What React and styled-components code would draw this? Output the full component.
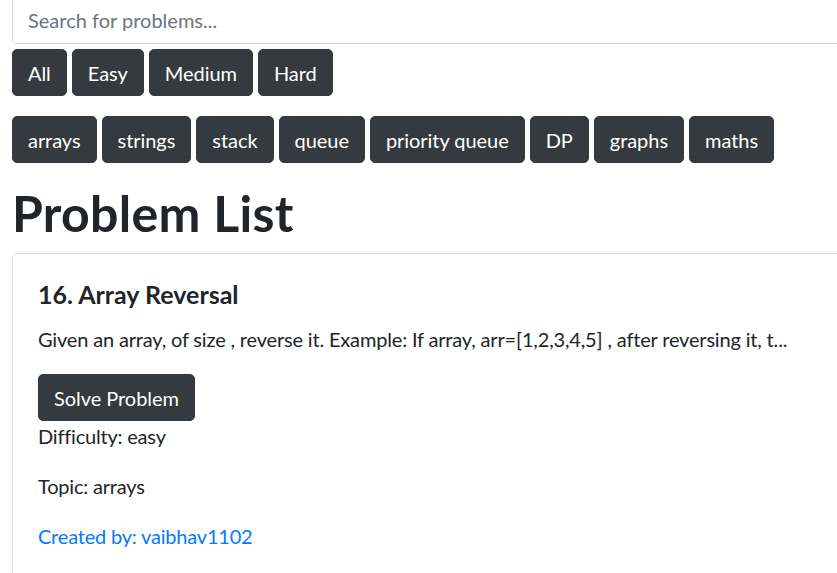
import React from 'react'
import styled, { createGlobalStyle } from 'styled-components'

const GlobalStyle = createGlobalStyle`
  html, body {
    margin: 0;
    padding: 0;
    overflow: hidden;
    background: #fff;
  }
  body {
    font-family: Lato, "Noto Sans", sans-serif;
    font-size: 20px;
    line-height: 1.5;
    color: #212529;
  }
`

const Page = styled.div`
  width: 1000px;
  padding-left: 12px;
  margin-top: -4px;
  box-sizing: border-box;
`

const SearchInput = styled.input`
  display: block;
  width: 100%;
  height: 48px;
  box-sizing: border-box;
  padding: 7px 15px;
  font-family: inherit;
  font-size: 20px;
  line-height: 1.5;
  color: #495057;
  background: #fff;
  border: 1px solid #ced4da;
  border-radius: 5px;
  outline: none;

  &::placeholder {
    color: #6c757d;
  }
`

const BtnRow = styled.div`
  display: flex;
  flex-wrap: wrap;
  gap: 5px;
  margin-top: ${props => props.top || 0}px;
`

const DarkBtn = styled.button`
  height: 47px;
  padding: 0 15px;
  font-family: inherit;
  font-size: 20px;
  line-height: 1.5;
  letter-spacing: -0.05px;
  color: #fff;
  background: #343a40;
  border: 1px solid #343a40;
  border-radius: 5px;
  cursor: pointer;
`

const Heading = styled.h1`
  margin: 20px 0 10px;
  font-size: 50px;
  font-weight: 700;
  line-height: 1.2;
  letter-spacing: 0.3px;
`

const Card = styled.div`
  border: 1px solid rgba(0, 0, 0, 0.125);
  border-radius: 5px;
  padding: 25px;
`

const CardTitle = styled.h5`
  margin: 0 0 15px;
  font-size: 25px;
  font-weight: 700;
  line-height: 1.2;
`

const CardText = styled.p`
  margin: 0 0 20px;
  letter-spacing: -0.17px;
`

const Meta = styled.p`
  margin: 0 0 20px;
  letter-spacing: -0.2px;
  color: ${props => props.link ? '#007bff' : '#212529'};
`

const levels = ['All', 'Easy', 'Medium', 'Hard']
const topics = ['arrays', 'strings', 'stack', 'queue', 'priority queue', 'DP', 'graphs', 'maths']

export default function App() {
  return (
    <Page>
      <GlobalStyle />
      <SearchInput placeholder="Search for problems..." />
      <BtnRow top={5}>
        {levels.map(l => <DarkBtn key={l}>{l}</DarkBtn>)}
      </BtnRow>
      <BtnRow top={20}>
        {topics.map(t => <DarkBtn key={t}>{t}</DarkBtn>)}
      </BtnRow>
      <Heading>Problem List</Heading>
      <Card>
        <CardTitle>16. Array Reversal</CardTitle>
        <CardText>
          Given an array, of size , reverse it. Example: If array, arr=[1,2,3,4,5] , after reversing it, t...
        </CardText>
        <DarkBtn>Solve Problem</DarkBtn>
        <Meta>Difficulty: easy</Meta>
        <Meta>Topic: arrays</Meta>
        <Meta link>Created by: vaibhav1102</Meta>
      </Card>
    </Page>
  )
}
